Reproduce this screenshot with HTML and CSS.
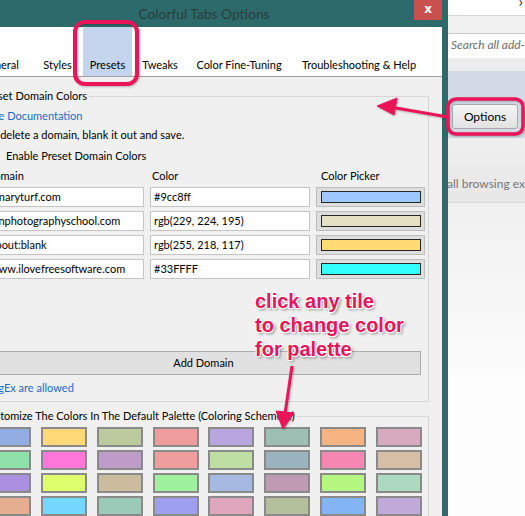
FILE: index.html
```html
<!DOCTYPE html>
<html lang="en">
<head>
    <meta charset="UTF-8">
    <title>Colorful Tabs Options</title>
    <link rel="stylesheet" href="styles.css">
</head>
<body>
    <div class="screen">
        <div class="window">
            <div class="titlebar">
                <span class="title">Colorful Tabs Options</span>
                <span class="close">x</span>
            </div>
            <div class="client">
                <nav class="tabs">
                    <span class="tab t-general">General</span>
                    <span class="tab t-styles">Styles</span>
                    <span class="tab t-presets active">Presets</span>
                    <span class="tab t-tweaks">Tweaks</span>
                    <span class="tab t-fine">Color Fine-Tuning</span>
                    <span class="tab t-help">Troubleshooting &amp; Help</span>
                </nav>
                <div class="page">
                    <fieldset class="group presets">
                        <legend>Preset Domain Colors</legend>
                        <a class="link doc-link">The Documentation</a>
                        <p class="hint">To delete a domain, blank it out and save.</p>
                        <label class="check"><span class="box"></span>Enable Preset Domain Colors</label>
                        <div class="domains">
                            <div class="head">Domain</div>
                            <div class="head h-color">Color</div>
                            <div class="head h-picker">Color Picker</div>

                            <div class="field">binaryturf.com</div>
                            <div class="field">#9cc8ff</div>
                            <div class="picker"><span class="swatch" style="background:#9cc8ff"></span></div>

                            <div class="field">lenphotographyschool.com</div>
                            <div class="field">rgb(229, 224, 195)</div>
                            <div class="picker"><span class="swatch" style="background:rgb(229,224,195)"></span></div>

                            <div class="field">about:blank</div>
                            <div class="field">rgb(255, 218, 117)</div>
                            <div class="picker"><span class="swatch" style="background:rgb(255,218,117)"></span></div>

                            <div class="field">www.ilovefreesoftware.com</div>
                            <div class="field">#33FFFF</div>
                            <div class="picker"><span class="swatch" style="background:#33FFFF"></span></div>
                        </div>
                        <div class="add">Add Domain</div>
                        <a class="link regex-link">RegEx are allowed</a>
                    </fieldset>

                    <fieldset class="group palette">
                        <legend>Customize The Colors In The Default Palette (Coloring Scheme 1)</legend>
                        <div class="tiles">
                            <span class="tile" style="background:#92ade1"></span>
                            <span class="tile" style="background:#ffd977"></span>
                            <span class="tile" style="background:#bdca9e"></span>
                            <span class="tile" style="background:#ee9c9c"></span>
                            <span class="tile" style="background:#b9a6df"></span>
                            <span class="tile" style="background:#9cc1b4"></span>
                            <span class="tile" style="background:#f5b482"></span>
                            <span class="tile" style="background:#d8aabf"></span>

                            <span class="tile" style="background:#8fe1a9"></span>
                            <span class="tile" style="background:#ff77da"></span>
                            <span class="tile" style="background:#bd9cc9"></span>
                            <span class="tile" style="background:#ee9c9c"></span>
                            <span class="tile" style="background:#bddfa3"></span>
                            <span class="tile" style="background:#9cb4c0"></span>
                            <span class="tile" style="background:#f787b2"></span>
                            <span class="tile" style="background:#d6bfa7"></span>

                            <span class="tile" style="background:#ab90e1"></span>
                            <span class="tile" style="background:#dfff6f"></span>
                            <span class="tile" style="background:#ccbc9e"></span>
                            <span class="tile" style="background:#9ff09f"></span>
                            <span class="tile" style="background:#a6b9e0"></span>
                            <span class="tile" style="background:#bf9bb3"></span>
                            <span class="tile" style="background:#b4f680"></span>
                            <span class="tile" style="background:#acd9c0"></span>

                            <span class="tile" style="background:#e6ae90"></span>
                            <span class="tile" style="background:#74d7ff"></span>
                            <span class="tile" style="background:#9ccab8"></span>
                            <span class="tile" style="background:#9f9ff0"></span>
                            <span class="tile" style="background:#e0a6bb"></span>
                            <span class="tile" style="background:#b4bf9b"></span>
                            <span class="tile" style="background:#82b4f6"></span>
                            <span class="tile" style="background:#c0aada"></span>
                        </div>
                    </fieldset>
                </div>
            </div>
        </div>

        <aside class="addons">
            <div class="top-bar"><span class="chev">&#8250;</span></div>
            <div class="strip"></div>
            <div class="search">Search all add-ons</div>
            <div class="spacer"></div>
            <div class="item selected">
                <div class="opt-btn">Options</div>
            </div>
            <div class="item next">
                <div class="desc">all browsing experience</div>
            </div>
            <div class="rest"></div>
        </aside>

        <!-- annotations drawn over the screenshot -->
        <svg class="marks" width="525" height="516" viewBox="0 0 525 516">
            <g fill="none" stroke="#ec1459" stroke-width="4">
                <rect x="75" y="22" width="62" height="62" rx="10"/>
                <rect x="448" y="99" width="75" height="35" rx="8" stroke-width="3.5"/>
            </g>
            <g fill="#ec1459" stroke="#ec1459">
                <line x1="448" y1="117" x2="390" y2="107" stroke-width="3"/>
                <polygon points="377,106 397,98 394,115" stroke-width="1"/>
                <line x1="292" y1="366" x2="285" y2="414" stroke-width="3"/>
                <polygon points="283,429 276,411 294,413" stroke-width="1"/>
            </g>
        </svg>
        <div class="note">click any tile<br>to change color<br>for palette</div>
    </div>
</body>
</html>
```

FILE: styles.css
```css
html, body {
    margin: 0;
    padding: 0;
}
body {
    font-family: Lato, "Open Sans", sans-serif;
    font-size: 11px;
    color: #000;
    background: #fff;
}
.screen {
    position: relative;
    width: 525px;
    height: 516px;
    overflow: hidden;
    display: flex;
}

/* options window, its left part is off screen */
.window {
    flex: 0 0 488px;
    margin-left: -40px;
    background: #2d6a6b;
    display: flex;
    flex-direction: column;
}
.titlebar {
    position: relative;
    height: 27px;
    display: flex;
    align-items: center;
    justify-content: center;
}
.title {
    font-size: 13.8px;
    color: #2b3c3d;
    margin-top: -1px;
}
.close {
    position: absolute;
    right: 6px;
    top: 0;
    width: 28px;
    height: 20px;
    background: #c8504f;
    color: #fff;
    font-family: "DejaVu Sans", sans-serif;
    font-weight: bold;
    font-size: 12px;
    line-height: 18px;
    text-align: center;
}
.client {
    flex: 1;
    margin-right: 6px;
    background: #f0f0f0;
    overflow: hidden;
}

.tabs {
    height: 49px;
    background: #fff;
    border-bottom: 1px solid #a0a0a0;
    display: flex;
    padding-left: 8px;
}
.tab {
    display: flex;
    align-items: flex-end;
    justify-content: center;
    padding-bottom: 3px;
    line-height: 16px;
    white-space: nowrap;
    box-sizing: border-box;
}
.tab.active { background: #c4d4ed; }
.t-general { flex: 0 0 64px; }
.t-styles { flex: 0 0 51px; }
.t-presets { flex: 0 0 49px; }
.t-tweaks { flex: 0 0 56px; }
.t-fine { flex: 0 0 102px; }
.t-help { flex: 0 0 138px; }

.page {
    padding: 11px 13px 0 12px;
}
.group {
    margin: 0;
    border: 1px solid #d6d6d6;
    padding: 0 3px 5px 13px;
    min-width: 0;
}
.group legend {
    margin-left: -6px;
    padding: 0 2px;
    line-height: 16px;
}
.link {
    display: block;
    color: #1a6dc8;
    line-height: 16px;
    white-space: nowrap;
}
.doc-link { margin-top: 4px; }
.hint {
    margin: 3px 0 0;
    line-height: 16px;
    white-space: nowrap;
}
.check {
    display: flex;
    align-items: center;
    margin-top: 5px;
    line-height: 16px;
    white-space: nowrap;
}
.check .box {
    width: 11px;
    height: 11px;
    border: 1px solid #333;
    background: #fff;
    margin-right: 7px;
    flex: 0 0 auto;
}

.domains {
    display: grid;
    grid-template-columns: 158px 160px 109px;
    column-gap: 6px;
    row-gap: 4px;
    margin-top: 4px;
}
.head {
    line-height: 16px;
    margin-bottom: -1px;
}
.h-color { padding-left: 2px; }
.h-picker { padding-left: 5px; }
.field {
    height: 20px;
    box-sizing: border-box;
    border: 1px solid #c4c4c4;
    background: #fff;
    padding: 0 3px;
    line-height: 18px;
    white-space: nowrap;
    overflow: hidden;
}
.picker {
    height: 20px;
    box-sizing: border-box;
    border: 1px solid #bdbdbd;
    background: #dedede;
    padding: 3px 3px 3px 4px;
    display: flex;
}
.swatch {
    flex: 1;
    border: 1px solid #262626;
}

.add {
    margin: 72px 4px 0 0;
    height: 24px;
    box-sizing: border-box;
    border: 1px solid #adadad;
    background: #e1e1e1;
    text-align: center;
    line-height: 22px;
}
.regex-link { margin-top: 5px; }

.palette {
    margin-top: 6px;
    padding-bottom: 20px;
}
.tiles {
    display: grid;
    grid-template-columns: repeat(8, 46px);
    justify-content: space-between;
    row-gap: 3px;
    margin: 3px 3px 0 -1px;
}
.tile {
    height: 20px;
    box-sizing: border-box;
    border: 2px solid #8a8a8a;
}

/* add-ons manager behind the window */
.addons {
    flex: 1;
    display: flex;
    flex-direction: column;
    background: #fbfbfb;
    overflow: hidden;
    white-space: nowrap;
    font-size: 12px;
}
.top-bar {
    height: 15px;
    background: #fff;
    border-bottom: 1px solid #d4d4d4;
    position: relative;
}
.chev {
    position: absolute;
    right: 2px;
    top: -9px;
    font-size: 16px;
    color: #333;
}
.strip {
    height: 17px;
    background: #f1f1f1;
}
.search {
    height: 24px;
    border-top: 1px solid #c9c9c9;
    background: #fff;
    color: #6e6e6e;
    font-style: italic;
    line-height: 22px;
    padding-left: 3px;
}
.spacer {
    height: 13px;
    background: #ececec;
}
.item.selected {
    height: 67px;
    background: #d3dbe6;
    padding: 33px 0 0 4px;
    box-sizing: border-box;
}
.opt-btn {
    width: 66px;
    height: 25px;
    box-sizing: border-box;
    border: 1px solid #a9a9a9;
    border-radius: 3px;
    background: linear-gradient(#f4f4f4, #e2e2e2);
    text-align: center;
    line-height: 23px;
}
.item.next {
    height: 65px;
    box-sizing: border-box;
    background: linear-gradient(#efefef, #e7e7e7);
    border-bottom: 1px solid #dadada;
    padding-top: 38px;
}
.desc {
    color: #777;
    line-height: 16px;
    margin-left: -1px;
}
.rest {
    flex: 1;
    background: linear-gradient(#f0f0f0, #fdfdfd 60%);
}

.marks {
    position: absolute;
    left: 0;
    top: 0;
    filter: drop-shadow(1px 1px 1px rgba(0,0,0,0.25));
}
.note {
    position: absolute;
    left: 255px;
    top: 289px;
    font-family: "Liberation Sans", Arial, sans-serif;
    font-weight: bold;
    font-size: 20px;
    line-height: 24px;
    color: #ec1459;
    white-space: nowrap;
    text-shadow: -1px -1px 0 #fff, 1px -1px 0 #fff, -1px 1px 0 #fff, 1px 1px 0 #fff,
        2px 2px 3px rgba(0,0,0,0.45);
}
```
